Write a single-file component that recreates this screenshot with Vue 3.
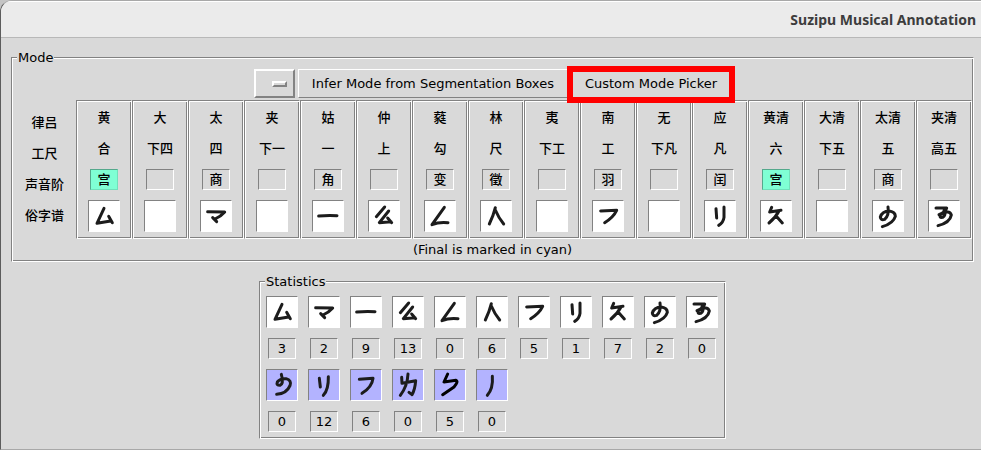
<script setup>
const glyphs = {
  mu: 'M48 25 L27 70 L68 63 M62 49 L73 68',
  ma: 'M23 35 L74 36 Q64 48 45 57 M38 53 L50 65',
  yi: 'M20 48 Q48 45 75 47',
  yao: 'M50 21 L25 50 M62 33 L34 68 L69 65 M59 54 L71 68',
  le: 'M61 22 L24 74 Q45 65 72 68',
  ren: 'M46 23 Q40 48 28 72 M46 30 Q56 54 71 72',
  fu: 'M26 33 L74 31 Q64 52 38 68',
  li: 'M36 26 L38 54 M60 21 L60 52 Q58 68 44 76',
  jiu: 'M35 22 L29 36 L63 31 M57 33 Q47 52 27 69 M49 49 L67 69',
  no: 'M48 21 Q52 46 38 58 Q26 62 25 51 Q30 34 52 33 Q70 36 70 49 Q64 70 31 80',
  yo: 'M24 24 L56 24 Q54 35 33 44 M48 32 Q55 46 44 52 Q32 54 38 43 Q64 28 70 45 Q66 68 30 77',
  noLow: 'M46 16 Q54 44 42 49 Q30 49 34 39 Q42 28 60 29 Q78 34 72 50 Q62 74 32 76',
  liLow: 'M34 28 L37 54 M61 23 Q62 62 46 79',
  fuLow: 'M28 31 L69 28 Q66 54 36 73',
  li4: 'M29 25 L30 43 L71 35 Q69 62 60 77 L51 70 M48 15 Q46 52 25 79',
  bao: 'M41 15 L30 39 L66 34 Q74 38 60 54 L26 77',
  pie: 'M49 22 Q52 58 34 79',
}

const pitches = [
  ['黄', '合', '宫', 'mu'],
  ['大', '下四', '', ''],
  ['太', '四', '商', 'ma'],
  ['夹', '下一', '', ''],
  ['姑', '一', '角', 'yi'],
  ['仲', '上', '', 'yao'],
  ['蕤', '勾', '变', 'le'],
  ['林', '尺', '徵', 'ren'],
  ['夷', '下工', '', ''],
  ['南', '工', '羽', 'fu'],
  ['无', '下凡', '', ''],
  ['应', '凡', '闰', 'li'],
  ['黄清', '六', '宫', 'jiu'],
  ['大清', '下五', '', ''],
  ['太清', '五', '商', 'no'],
  ['夹清', '高五', '', 'yo'],
].map(([name, gongche, tone, glyph]) => ({ name, gongche, tone, glyph }))

const statistics = [
  {
    lower: false,
    items: [['mu', 3], ['ma', 2], ['yi', 9], ['yao', 13], ['le', 0], ['ren', 6], ['fu', 5], ['li', 1], ['jiu', 7], ['no', 2], ['yo', 0]],
  },
  {
    lower: true,
    items: [['noLow', 0], ['liLow', 12], ['fuLow', 6], ['li4', 0], ['bao', 5], ['pie', 0]],
  },
]
</script>

<template>
  <div class="desktop">
    <div class="window">
      <header class="titlebar"><h1>Suzipu Musical Annotation</h1></header>
      <main>
        <section class="frame mode">
          <h2>Mode</h2>
          <div class="toolbar">
            <button class="menu-button" type="button" aria-label="Mode"><span class="indicator"></span></button>
            <button class="button" type="button">Infer Mode from Segmentation Boxes</button>
            <div class="marked">
              <button class="button" type="button">Custom Mode Picker</button>
              <span class="marker"></span>
            </div>
          </div>
          <table class="pitches">
            <tbody>
              <tr class="first">
                <th scope="row">律吕</th>
                <td v-for="(p, i) in pitches" :key="i">{{ p.name }}</td>
              </tr>
              <tr class="middle">
                <th scope="row">工尺</th>
                <td v-for="(p, i) in pitches" :key="i" class="text">{{ p.gongche }}</td>
              </tr>
              <tr class="middle">
                <th scope="row">声音阶</th>
                <td v-for="(p, i) in pitches" :key="i">
                  <div class="value" :class="{ final: p.tone === '宫' }">{{ p.tone }}</div>
                </td>
              </tr>
              <tr class="last">
                <th scope="row">俗字谱</th>
                <td v-for="(p, i) in pitches" :key="i">
                  <div class="tile">
                    <svg v-if="p.glyph" viewBox="0 0 96 96"><path :d="glyphs[p.glyph]" /></svg>
                  </div>
                </td>
              </tr>
            </tbody>
          </table>
          <p class="note">(Final is marked in cyan)</p>
        </section>

        <section class="frame stats">
          <h2>Statistics</h2>
          <table>
            <tbody v-for="(group, g) in statistics" :key="g">
              <tr class="glyph-row">
                <td v-for="[glyph] in group.items" :key="glyph">
                  <div class="tile" :class="{ lower: group.lower }">
                    <svg viewBox="0 0 96 96"><path :d="glyphs[glyph]" :class="{ dark: glyph === 'bao' }" /></svg>
                  </div>
                </td>
              </tr>
              <tr class="count-row">
                <td v-for="[glyph, count] in group.items" :key="glyph">
                  <div class="value">{{ count }}</div>
                </td>
              </tr>
            </tbody>
          </table>
        </section>
      </main>
    </div>
  </div>
</template>

<style>
body {
  margin: 0;
  background: #d9d9d9;
}
</style>

<style scoped>
* {
  box-sizing: border-box;
}

.desktop {
  background: #c4c4c4;
  font-family: "DejaVu Sans", "Noto Sans CJK SC", sans-serif;
  font-size: 13px;
  color: #000;
}

.window {
  min-height: 100vh;
  border: solid #a8a8a8;
  border-width: 1px 0 1px 1px;
  border-left-color: #5c5c5c;
  border-radius: 12px 0 0 0;
  background: #d9d9d9;
  overflow: hidden;
}

.titlebar {
  display: flex;
  align-items: center;
  justify-content: flex-end;
  height: 37px;
  padding-right: 5px;
  border-top: 1px solid #fff;
  border-bottom: 1px solid #b8b8b8;
  background: #ebebeb;
}

h1 {
  margin: 0;
  font: bold 14px/20px "Noto Sans", sans-serif;
  color: #3d3d3d;
}

main {
  display: flex;
  flex-direction: column;
  align-items: center;
  gap: 19px;
  padding: 19px 7px 10px 10px;
}

.frame {
  border: 1px solid;
  border-color: #828282 #fff #fff #828282;
  box-shadow: inset 1px 1px #fff, inset -1px -1px #828282;
}

.mode {
  width: 100%;
  padding: 1px;
}

h2 {
  width: max-content;
  height: 17px;
  margin: -10px 0 0 4px;
  padding: 0 1px;
  background: #d9d9d9;
  font-size: 13px;
  line-height: 17px;
  font-weight: normal;
}

.toolbar {
  display: flex;
  justify-content: center;
  gap: 3px;
  margin: 3px 0 2px;
}

button {
  height: 29px;
  background: #d9d9d9;
  border-style: solid;
  border-color: #fff #828282 #828282 #fff;
  border-radius: 0;
  font: inherit;
  color: #000;
}

.button {
  padding: 0 13px;
  border-width: 1px;
}

.menu-button {
  display: flex;
  align-items: center;
  justify-content: flex-end;
  width: 41px;
  padding: 0 6px;
  border-width: 2px;
}

.indicator {
  width: 15px;
  height: 6px;
  border: 2px solid;
  border-color: #fff #828282 #828282 #fff;
}

.marked {
  position: relative;
}

.marker {
  position: absolute;
  inset: -3px -4px -5px;
  border: 6px solid #f00;
  pointer-events: none;
}

table {
  border-collapse: separate;
  border-spacing: 0;
}

td,
th {
  padding: 0;
  font-weight: normal;
  text-align: center;
}

.pitches {
  width: 100%;
  table-layout: fixed;
  font-family: "Noto Sans CJK SC", sans-serif;
  font-size: 13px;
  line-height: 19px;
}

.pitches th,
.pitches td {
  font-weight: 500;
}

.pitches th {
  width: 63px;
  padding-top: 10px;
  vertical-align: top;
}

.pitches td {
  border: 0 solid;
  border-color: #828282 #fff #fff #828282;
  border-width: 0 1px;
  box-shadow: inset 1px 0 #fff, inset -1px 0 #828282;
}

.first {
  height: 33px;
}

.pitches .first th {
  padding-top: 12px;
}

.pitches .first td {
  padding-bottom: 2px;
  border-top-width: 1px;
  box-shadow: inset 1px 1px #fff, inset -1px 0 #828282;
}

.pitches .text {
  padding-bottom: 2px;
}

.middle {
  height: 31px;
}

.last {
  height: 44px;
}

.pitches .last td {
  padding-top: 5px;
  border-bottom-width: 1px;
  box-shadow: inset 1px 0 #fff, inset -1px -1px #828282;
  vertical-align: top;
}

.value,
.tile {
  margin: 0 auto;
  border: 1px solid;
  border-color: #828282 #fff #fff #828282;
}

.value {
  width: 28px;
  height: 21px;
  line-height: 18px;
}

.final {
  background: #7fffd4;
  border-color: #55a88c #70e0ba #70e0ba #55a88c;
}

.tile {
  width: 32px;
  height: 32px;
  background: #fff;
}

.lower {
  background: #b3b3ff;
}

svg {
  display: block;
  width: 32px;
  height: 32px;
  margin: -1px;
}

path {
  fill: none;
  stroke: #1c1c1c;
  stroke-width: 9;
  stroke-linecap: round;
  stroke-linejoin: round;
}

.dark {
  stroke: #000;
}

.note {
  margin: 0;
  padding-top: 1px;
  line-height: 20px;
  text-align: center;
}

.stats {
  padding: 1px 2px 1px 1px;
}

.stats table {
  margin-top: 1px;
}

.stats td {
  width: 42px;
}

.stats .value {
  line-height: 20px;
}

.glyph-row {
  height: 42px;
}

.count-row {
  height: 31px;
}
</style>
